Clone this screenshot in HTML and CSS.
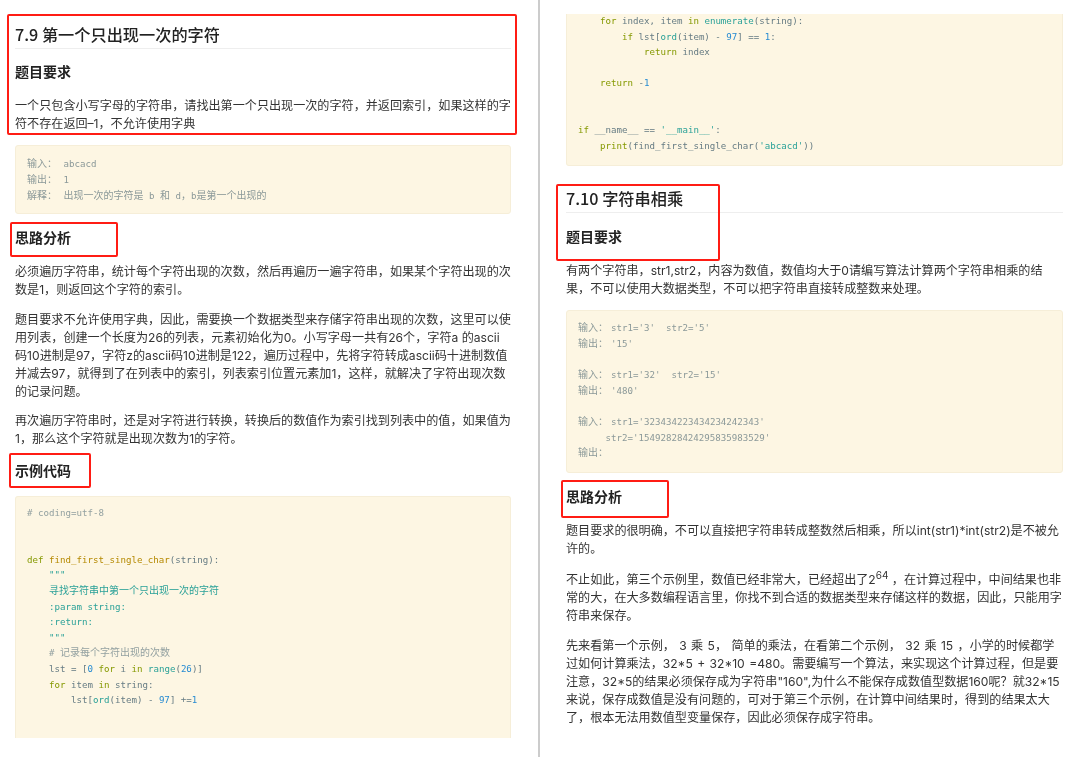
FILE: index.html
```html
<!DOCTYPE html>
<html lang="zh-CN">
<head>
<meta charset="utf-8">
<title>7.9 第一个只出现一次的字符</title>
<link rel="stylesheet" href="styles.css">
</head>
<body>
<div class="page">
  <section class="pane pane-left">
    <h1 class="first">7.9 第一个只出现一次的字符</h1>
    <h3 class="req">题目要求</h3>
    <p class="after-h">一个只包含小写字母的字符串，请找出第一个只出现一次的字符，并返回索引，如果这样的字符不存在返回–1，不允许使用字典</p>
    <pre class="code sample-a"><span class="cn lab">输入：</span> abcacd
<span class="cn lab">输出：</span> 1
<span class="cn lab">解释：</span> <span class="cn">出现一次的字符是</span> b <span class="cn">和</span> d<span class="cn">，</span>b<span class="cn">是第一个出现的</span></pre>
    <h3>思路分析</h3>
    <p class="after-h">必须遍历字符串，统计每个字符出现的次数，然后再遍历一遍字符串，如果某个字符出现的次数是1，则返回这个字符的索引。</p>
    <p>题目要求不允许使用字典，因此，需要换一个数据类型来存储字符串出现的次数，这里可以使用列表，创建一个长度为26的列表，元素初始化为0。小写字母一共有26个，字符a 的ascii码10进制是97，字符z的ascii码10进制是122，遍历过程中，先将字符转成ascii码十进制数值并减去97，就得到了在列表中的索引，列表索引位置元素加1，这样，就解决了字符出现次数的记录问题。</p>
    <p class="tight">再次遍历字符串时，还是对字符进行转换，转换后的数值作为索引找到列表中的值，如果值为1，那么这个字符就是出现次数为1的字符。</p>
    <h3 class="code-head">示例代码</h3>
    <pre class="code code-cut"><span class="c"># coding=utf-8</span>


<span class="k">def</span> <span class="f">find_first_single_char</span>(string):
    <span class="s">"""
    <span class="cn">寻找字符串中第一个只出现一次的字符</span>
    :param string:
    :return:
    """</span>
    <span class="c"># <span class="cn">记录每个字符出现的次数</span></span>
    lst = [<span class="n">0</span> <span class="k">for</span> i <span class="k">in</span> <span class="s">range</span>(<span class="n">26</span>)]
    <span class="k">for</span> item <span class="k">in</span> string:
        lst[<span class="s">ord</span>(item) - <span class="n">97</span>] +=<span class="n">1</span></pre>
  </section>
  <section class="pane pane-right">
    <pre class="code code-cont">    <span class="k">for</span> index, item <span class="k">in</span> <span class="s">enumerate</span>(string):
        <span class="k">if</span> lst[<span class="s">ord</span>(item) - <span class="n">97</span>] == <span class="n">1</span>:
            <span class="k">return</span> index

    <span class="k">return</span> -<span class="n">1</span>


<span class="k">if</span> __name__ == <span class="s">'__main__'</span>:
    <span class="k">print</span>(find_first_single_char(<span class="s">'abcacd'</span>))</pre>
    <h1>7.10 字符串相乘</h1>
    <h3 class="req">题目要求</h3>
    <p class="after-h">有两个字符串，str1,str2，内容为数值，数值均大于0请编写算法计算两个字符串相乘的结果，不可以使用大数据类型，不可以把字符串直接转成整数来处理。</p>
    <pre class="code sample-b"><span class="cn lab">输入：</span>str1='3'  str2='5'
<span class="cn lab">输出：</span>'15'

<span class="cn lab">输入：</span>str1='32'  str2='15'
<span class="cn lab">输出：</span>'480'

<span class="cn lab">输入：</span>str1='323434223434234242343'
     str2='15492828424295835983529'
<span class="cn lab">输出：</span></pre>
    <h3>思路分析</h3>
    <p class="after-h">题目要求的很明确，不可以直接把字符串转成整数然后相乘，所以int(str1)*int(str2)是不被允许的。</p>
    <p class="wide">不止如此，第三个示例里，数值已经非常大，已经超出了2<sup>64</sup> ，在计算过程中，中间结果也非常的大，在大多数编程语言里，你找不到合适的数据类型来存储这样的数据，因此，只能用字符串来保存。</p>
    <p class="spaced">先来看第一个示例， 3 乘 5， 简单的乘法，在看第二个示例， 32 乘 15 ，小学的时候都学过如何计算乘法，32*5 + 32*10 =480。需要编写一个算法，来实现这个计算过程，但是要注意，32*5的结果必须保存成为字符串"160",为什么不能保存成数值型数据160呢？就32*15来说，保存成数值是没有问题的，可对于第三个示例，在计算中间结果时，得到的结果太大了，根本无法用数值型变量保存，因此必须保存成字符串。</p>
  </section>
  <div class="mark mark-1"></div>
  <div class="mark mark-2"></div>
  <div class="mark mark-3"></div>
  <div class="mark mark-4"></div>
  <div class="mark mark-5"></div>
</div>
</body>
</html>
```
FILE: styles.css
```css
* { box-sizing: border-box; }
html, body { margin: 0; padding: 0; background: #fff; }
body { overflow: hidden; }
.page {
  position: relative;
  display: flex;
  width: 1080px;
  height: 757px;
  overflow: hidden;
  background: #fff;
  color: #333;
  font-family: Inter, "Noto Sans CJK SC", sans-serif;
  font-size: 12.1px;
  filter: blur(0.3px);
}
.pane { height: 757px; overflow: hidden; }
.pane-left { width: 540px; padding: 0 27px 0 15px; border-right: 2px solid #ccc; }
.pane-right { width: 540px; padding: 0 17px 0 26px; }
h1 {
  margin: 22px 0 0;
  padding-bottom: 4px;
  border-bottom: 1px solid #eee;
  font-family: "Noto Sans CJK SC", sans-serif;
  font-size: 16.2px;
  line-height: 20px;
  font-weight: 500;
  color: #222;
}
h1.first { margin-top: 24px; }
h3 {
  margin: 13px 0 0;
  font-family: "Noto Sans CJK SC", sans-serif;
  font-size: 14px;
  line-height: 20px;
  font-weight: 700;
  color: #222;
}
h3.req { margin-top: 12px; }
.pane-right h3.req { margin-top: 13px; }
h3.code-head { margin-top: 12px; }
p { margin: 12px 0 0; line-height: 18px; }
p.after-h { margin-top: 16px; }
p.tight { margin-top: 11px; }
p.wide { margin-top: 13px; }
p.spaced { word-spacing: 1px; }
sup { font-size: 10px; line-height: 0; }
.code {
  margin: 12px 0 0;
  padding: 9px 10px 11px 11px;
  background: #fdf6e3;
  border: 1px solid #f6eed8;
  border-radius: 3px;
  color: #657b83;
  font-family: "DejaVu Sans Mono", "Noto Sans CJK SC", monospace;
  font-size: 9.13px;
  line-height: 15.6px;
  white-space: pre;
  overflow: hidden;
}
.cn { font-family: "Noto Sans CJK SC", sans-serif; font-size: 10px; line-height: 1; }
.sample-a, .sample-b { padding-top: 10px; padding-bottom: 10px; color: #8b9999; }
.sample-a { line-height: 16px; padding-bottom: 9px; }
.sample-a .lab { margin-right: 1px; }
.sample-b .lab { margin-right: 3px; }
.code-cut { margin-top: 16px; height: 242px; border-bottom: 0; border-radius: 3px 3px 0 0; }
.code-cont { margin-top: 14px; padding-top: 0; border-top: 0; border-radius: 0 0 3px 3px; }
.k { color: #859900; }
.f { color: #b58900; }
.s { color: #2aa198; }
.n { color: #268bd2; }
.c { color: #93a1a1; }
.mark {
  position: absolute;
  border: 2px solid #ff1c14;
  border-radius: 2px;
}
.mark-1 { left: 7px; top: 14px; width: 510px; height: 121px; }
.mark-2 { left: 10px; top: 222px; width: 108px; height: 35px; }
.mark-3 { left: 9px; top: 453px; width: 82px; height: 35px; }
.mark-4 { left: 556px; top: 184px; width: 164px; height: 77px; }
.mark-5 { left: 561px; top: 480px; width: 108px; height: 38px; }
```
